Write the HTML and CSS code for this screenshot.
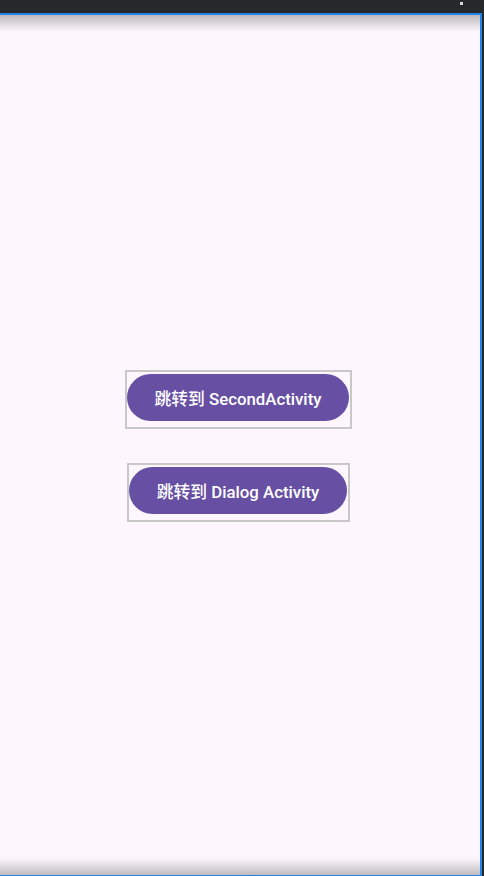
FILE: index.html
```html
<!DOCTYPE html>
<html lang="zh">
<head>
<meta charset="utf-8">
<link rel="stylesheet" href="styles.css">
<title>Demo</title>
</head>
<body>
<div class="topbar"><span class="dot"></span></div>
<div class="window">
  <div class="shade-top"></div>
  <main class="content">
    <div class="bounds first"><button class="btn">跳转到 SecondActivity</button></div>
    <div class="bounds second"><button class="btn">跳转到 Dialog Activity</button></div>
  </main>
  <div class="shade-bottom"></div>
</div>
</body>
</html>
```
FILE: styles.css
```css
html, body {
  margin: 0;
  padding: 0;
  background: #27282c;
  width: 484px;
  height: 876px;
  overflow: hidden;
}
.topbar {
  height: 13px;
  position: relative;
}
.dot {
  position: absolute;
  left: 460px;
  top: 2px;
  width: 3px;
  height: 3px;
  background: #d8d8d8;
}
.window {
  width: 480px;
  height: 860px;
  border-top: 2px solid #2382ea;
  border-right: 2px solid #2382ea;
  border-bottom: 1px solid #2382ea;
  background: #fdf7fd;
  display: flex;
  flex-direction: column;
  position: relative;
}
.shade-top {
  position: absolute;
  left: 0; right: 0; top: 0;
  height: 17px;
  background: linear-gradient(#bcbabc, rgba(253,247,253,0));
}
.shade-bottom {
  position: absolute;
  left: 0; right: 0; bottom: 0;
  height: 17px;
  background: linear-gradient(rgba(253,247,253,0), #bfbcbf);
}
.content {
  flex: 1;
  display: flex;
  flex-direction: column;
  align-items: center;
  justify-content: center;
  gap: 34px;
  padding-right: 3px;
  padding-top: 1px;
}
.bounds {
  border: 2px solid #c8c8c8;
  padding: 2px 1px 6px 0;
  display: flex;
}
.btn {
  height: 47px;
  border: none;
  border-radius: 24px;
  background: #6750a4;
  color: #ffffff;
  font-family: Roboto, "Noto Sans CJK SC", sans-serif;
  font-size: 16.8px;
  font-weight: 500;
  padding: 2px 28px 0;
  margin: 0;
  white-space: nowrap;
}
```
